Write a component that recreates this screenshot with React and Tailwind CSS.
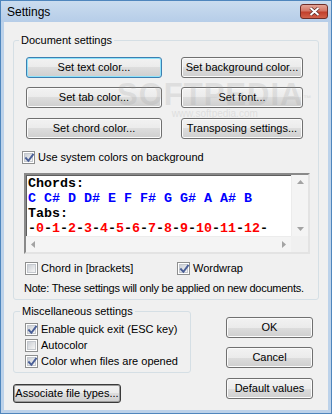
import clsx from 'clsx';

const ui = { fontFamily: '"Liberation Sans", Arial, sans-serif' };
const mono = { fontFamily: '"Liberation Mono", "DejaVu Sans Mono", monospace' };

const chordLine = ['C', 'C#', 'D', 'D#', 'E', 'F', 'F#', 'G', 'G#', 'A', 'A#', 'B'];
const frets = ['0', '1', '2', '3', '4', '5', '6', '7', '8', '9', '10', '11', '12'];

function Btn({ children, className, focus, strong }) {
  return (
    <div
      className={clsx(
        'flex items-center justify-center rounded-[3px] border text-[11px] leading-none text-black',
        'bg-[linear-gradient(to_bottom,#f2f2f2_0%,#ebebeb_50%,#dddddd_50%,#cfcfcf_100%)]',
        focus
          ? 'border-[#3c7fb1] shadow-[inset_0_0_0_1px_#8fe3fb]'
          : strong
            ? 'border-[#3a3a3a] shadow-[inset_0_0_0_1px_#9a9a9a]'
            : 'border-[#707070] shadow-[inset_0_0_0_1px_#fbfbfb]',
        className,
      )}
    >
      {children}
    </div>
  );
}

function Check({ checked }) {
  return (
    <span className="grid h-[13px] w-[13px] shrink-0 place-items-center border border-[#8e8f8f] bg-white">
      <span className="grid h-[9px] w-[9px] place-items-center border border-[#c4c8ce] bg-[linear-gradient(135deg,#cbcfd5,#f6f6f6)]">
        {checked && (
          <svg width="9" height="9" viewBox="0 0 9 9" className="overflow-visible">
            <path d="M1 4.2 L3.4 6.8 L8 0.6" fill="none" stroke="#4a5f97" strokeWidth="1.9" strokeLinecap="square" />
          </svg>
        )}
      </span>
    </span>
  );
}

function CheckRow({ checked, children, className }) {
  return (
    <label className={clsx('flex items-center gap-[3px] text-[11px] leading-[13px] text-black', className)}>
      <Check checked={checked} />
      <span className="whitespace-nowrap">{children}</span>
    </label>
  );
}

function Arrow({ dir }) {
  const paths = {
    up: 'M0 4 L3.5 0 L7 4 Z',
    down: 'M0 0 L7 0 L3.5 4 Z',
    left: 'M4 0 L4 7 L0 3.5 Z',
    right: 'M0 0 L4 3.5 L0 7 Z',
  };
  const vertical = dir === 'up' || dir === 'down';
  return (
    <svg width={vertical ? 7 : 4} height={vertical ? 4 : 7} viewBox={vertical ? '0 0 7 4' : '0 0 4 7'}>
      <path d={paths[dir]} fill="#a3a3a3" />
    </svg>
  );
}

export default function App() {
  return (
    <div style={ui} className="flex h-[414px] w-[332px] flex-col border border-[#4f86bd] bg-[#bcd2ea]">
      <div className="flex h-[21px] items-center justify-between bg-[linear-gradient(to_bottom,#cadcef,#b6cde8)] pl-[6px] pr-[3px]">
        <span className="text-[12px] leading-none text-black">Settings</span>
        <span className="mt-[-1px] grid h-[15px] w-[28px] place-items-center rounded-[3px] border border-[#6f2e28] bg-[linear-gradient(to_bottom,#e3a597_0%,#d47666_45%,#c2402d_55%,#d2624b_100%)]">
          <svg width="11" height="9" viewBox="0 0 11 9">
            <path d="M1.5 1 L9.5 8 M9.5 1 L1.5 8" stroke="#5a2a26" strokeWidth="3.4" />
            <path d="M1.5 1 L9.5 8 M9.5 1 L1.5 8" stroke="#ffffff" strokeWidth="2" />
          </svg>
        </span>
      </div>

      <div className="relative mx-[3px] h-[388px] w-[324px] bg-[#f0f0f0] pl-[9px] pt-[11px]">
        <fieldset className="w-[306px] rounded-[3px] border border-[#d5dfe5]">
          <legend className="ml-[5px] px-[2px] text-[11px] leading-[14px] text-black">Document settings</legend>
          <div className="pb-[4px]">
            <div className="ml-[12px] mt-[10px] flex gap-[19px]">
              <Btn focus className="h-[21px] w-[136px]">Set text color...</Btn>
              <Btn className="h-[21px] w-[122px]">Set background color...</Btn>
            </div>
            <div className="ml-[12px] mt-[9px] flex gap-[19px]">
              <Btn className="h-[21px] w-[136px]">Set tab color...</Btn>
              <Btn className="h-[21px] w-[122px]">Set font...</Btn>
            </div>
            <div className="ml-[12px] mt-[10px] flex gap-[19px]">
              <Btn className="h-[21px] w-[136px]">Set chord color...</Btn>
              <Btn className="h-[21px] w-[122px]">Transposing settings...</Btn>
            </div>

            <CheckRow checked className="ml-[8px] mt-[12px]">Use system colors on background</CheckRow>

            <div className="ml-[10px] mt-[9px] flex h-[81px] w-[286px] flex-col border-2 border-b-[#e3e3e3] border-l-[#8a8a8a] border-r-[#e3e3e3] border-t-[#8a8a8a] bg-white shadow-[inset_1px_1px_0_#5e5e5e]">
              <div className="flex min-h-0 flex-1">
                <div style={mono} className="flex-1 pl-[2px] pt-[1px] text-[13.33px] font-bold leading-[15px] whitespace-pre">
                  <div className="text-black">Chords:</div>
                  <div className="text-[#0000ff]">{chordLine.join(' ')}</div>
                  <div className="text-black">Tabs:</div>
                  <div>
                    <span className="text-black">-</span>
                    {frets.map((f) => (
                      <span key={f}>
                        <span className="text-[#ff0000]">{f}</span>
                        <span className="text-black">-</span>
                      </span>
                    ))}
                  </div>
                </div>
                <div className="flex w-[17px] flex-col items-center justify-between border-l border-[#ececec] bg-[#f4f4f4] py-[5px]">
                  <Arrow dir="up" />
                  <Arrow dir="down" />
                </div>
              </div>
              <div className="flex h-[16px]">
                <div className="flex flex-1 items-center justify-between border-t border-[#ececec] bg-[#f4f4f4] px-[5px]">
                  <Arrow dir="left" />
                  <Arrow dir="right" />
                </div>
                <div className="w-[17px] bg-[#f0f0f0]" />
              </div>
            </div>

            <div className="ml-[11px] mt-[8px] flex">
              <CheckRow className="w-[152px]">Chord in [brackets]</CheckRow>
              <CheckRow checked>Wordwrap</CheckRow>
            </div>

            <p className="ml-[10px] mt-[6px] whitespace-nowrap text-[11px] leading-[14px] tracking-[-0.25px] text-black">
              Note: These settings will only be applied on new documents.
            </p>
          </div>
        </fieldset>

        <div className="mt-[4px] flex items-start">
          <div className="flex w-[178px] flex-col">
            <fieldset className="rounded-[3px] border border-[#d5dfe5]">
              <legend className="ml-[6px] px-[2px] text-[11px] leading-[14px] text-black">Miscellaneous settings</legend>
              <div className="flex flex-col pb-[3px] pl-[11px] pt-[3px]">
                <CheckRow checked className="h-[16px]">Enable quick exit (ESC key)</CheckRow>
                <CheckRow className="h-[16px]">Autocolor</CheckRow>
                <CheckRow checked className="h-[16px]">Color when files are opened</CheckRow>
              </div>
            </fieldset>
            <Btn strong className="mt-[11px] h-[19px] w-[108px]">Associate file types...</Btn>
          </div>

          <div className="ml-[35px] mt-[13px] flex flex-col">
            <Btn className="h-[21px] w-[87px]">OK</Btn>
            <Btn className="mt-[9px] h-[21px] w-[87px]">Cancel</Btn>
            <Btn className="mt-[10px] h-[21px] w-[87px]">Default values</Btn>
          </div>
        </div>

        <div className="pointer-events-none absolute left-[113px] top-[57px] flex flex-col items-center text-[#9a9a9a] opacity-20">
          <span className="text-[31px] font-bold leading-[32px] tracking-[1px]">
            SOFTPEDIA<sup className="text-[8px]">™</sup>
          </span>
          <span className="mt-[-3px] text-[10px] leading-[11px]">www.softpedia.com</span>
        </div>
      </div>
    </div>
  );
}
